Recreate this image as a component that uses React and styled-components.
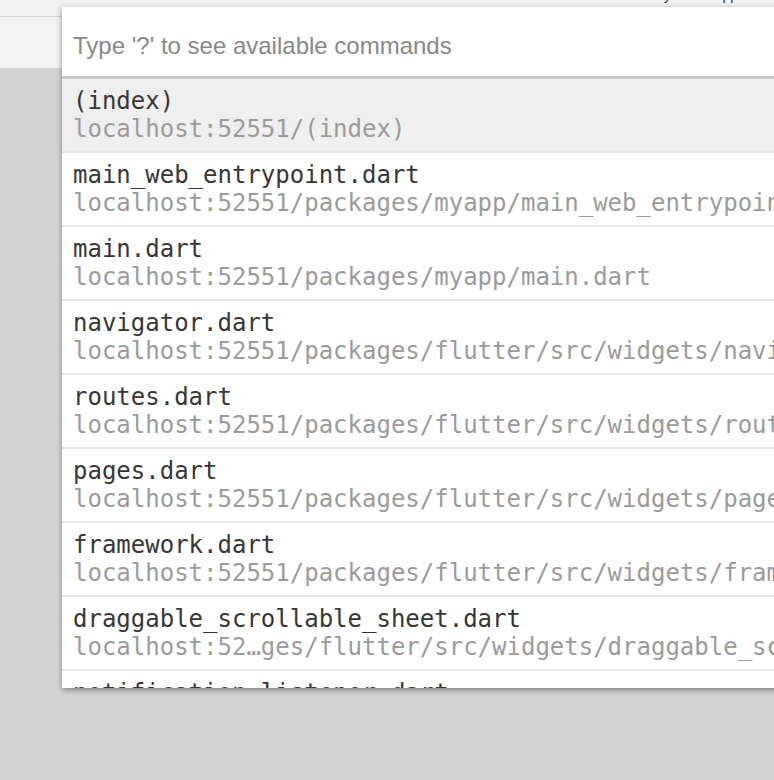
import React from "react";
import styled, { createGlobalStyle } from "styled-components";

const GlobalStyle = createGlobalStyle`
    html, body {
        margin: 0;
        padding: 0;
        overflow: hidden;
        background: #d4d4d4;
    }
`

const Page = styled.div`
    position: relative;
    width: 774px;
    height: 780px;
    overflow: hidden;
    background: #d4d4d4;
    font-family: "Liberation Sans", Arial, sans-serif;
`

const TopStrip = styled.div`
    height: 16px;
    background: #f1f1f1;
    border-bottom: 1px solid #d2d2d2;
    display: flex;
    justify-content: flex-end;
    align-items: flex-start;
    overflow: hidden;
`

const TopLabel = styled.span`
    font-size: 14px;
    line-height: 14px;
    margin-top: -12px;
    margin-right: 36px;
    color: #333;
`

const Toolbar = styled.div`
    height: 51px;
    background: #f3f3f3;
`

const Palette = styled.div`
    position: absolute;
    top: 7px;
    left: 62px;
    width: 760px;
    height: 681px;
    background: #fff;
    box-shadow: 0 2px 6px rgba(0, 0, 0, 0.4);
    display: flex;
    flex-direction: column;
    overflow: hidden;
`

const Input = styled.div`
    height: 72px;
    flex-shrink: 0;
    display: flex;
    align-items: center;
    padding: 8px 11px 0;
    box-sizing: border-box;
    border-bottom: 3px solid #c9c9c9;
    font-size: 24px;
    color: #888;
`

const List = styled.div`
    flex: 1;
    overflow: hidden;
`

const Row = styled.div`
    padding: 8px 11px 8px;
    border-bottom: 2px solid #e8e8e8;
    background: ${p => (p.$selected ? "#efefef" : "#fff")};
    font-family: "DejaVu Sans Mono", Menlo, monospace;
    font-size: 24px;
    line-height: 28px;
    white-space: nowrap;
`

const Title = styled.div`
    color: #363636;
`

const Sub = styled.div`
    color: #9a9a9a;
`

const files = [
    ["(index)", "localhost:52551/(index)"],
    ["main_web_entrypoint.dart", "localhost:52551/packages/myapp/main_web_entrypoint.dart"],
    ["main.dart", "localhost:52551/packages/myapp/main.dart"],
    ["navigator.dart", "localhost:52551/packages/flutter/src/widgets/navigator.dart"],
    ["routes.dart", "localhost:52551/packages/flutter/src/widgets/routes.dart"],
    ["pages.dart", "localhost:52551/packages/flutter/src/widgets/pages.dart"],
    ["framework.dart", "localhost:52551/packages/flutter/src/widgets/framework.dart"],
    ["draggable_scrollable_sheet.dart", "localhost:52\u2026ges/flutter/src/widgets/draggable_scrollable_sheet.dart"],
    ["notification_listener.dart", "localhost:52551/packages/flutter/src/widgets/notification_listener.dart"],
]

const App = () => {
    return (
        <Page>
            <GlobalStyle />
            <TopStrip>
                <TopLabel>Ready to run app</TopLabel>
            </TopStrip>
            <Toolbar />
            <Palette>
                <Input>Type '?' to see available commands</Input>
                <List>
                    {files.map(([name, path], i) => (
                        <Row key={name} $selected={i === 0}>
                            <Title>{name}</Title>
                            <Sub>{path}</Sub>
                        </Row>
                    ))}
                </List>
            </Palette>
        </Page>
    )
}

export default App
